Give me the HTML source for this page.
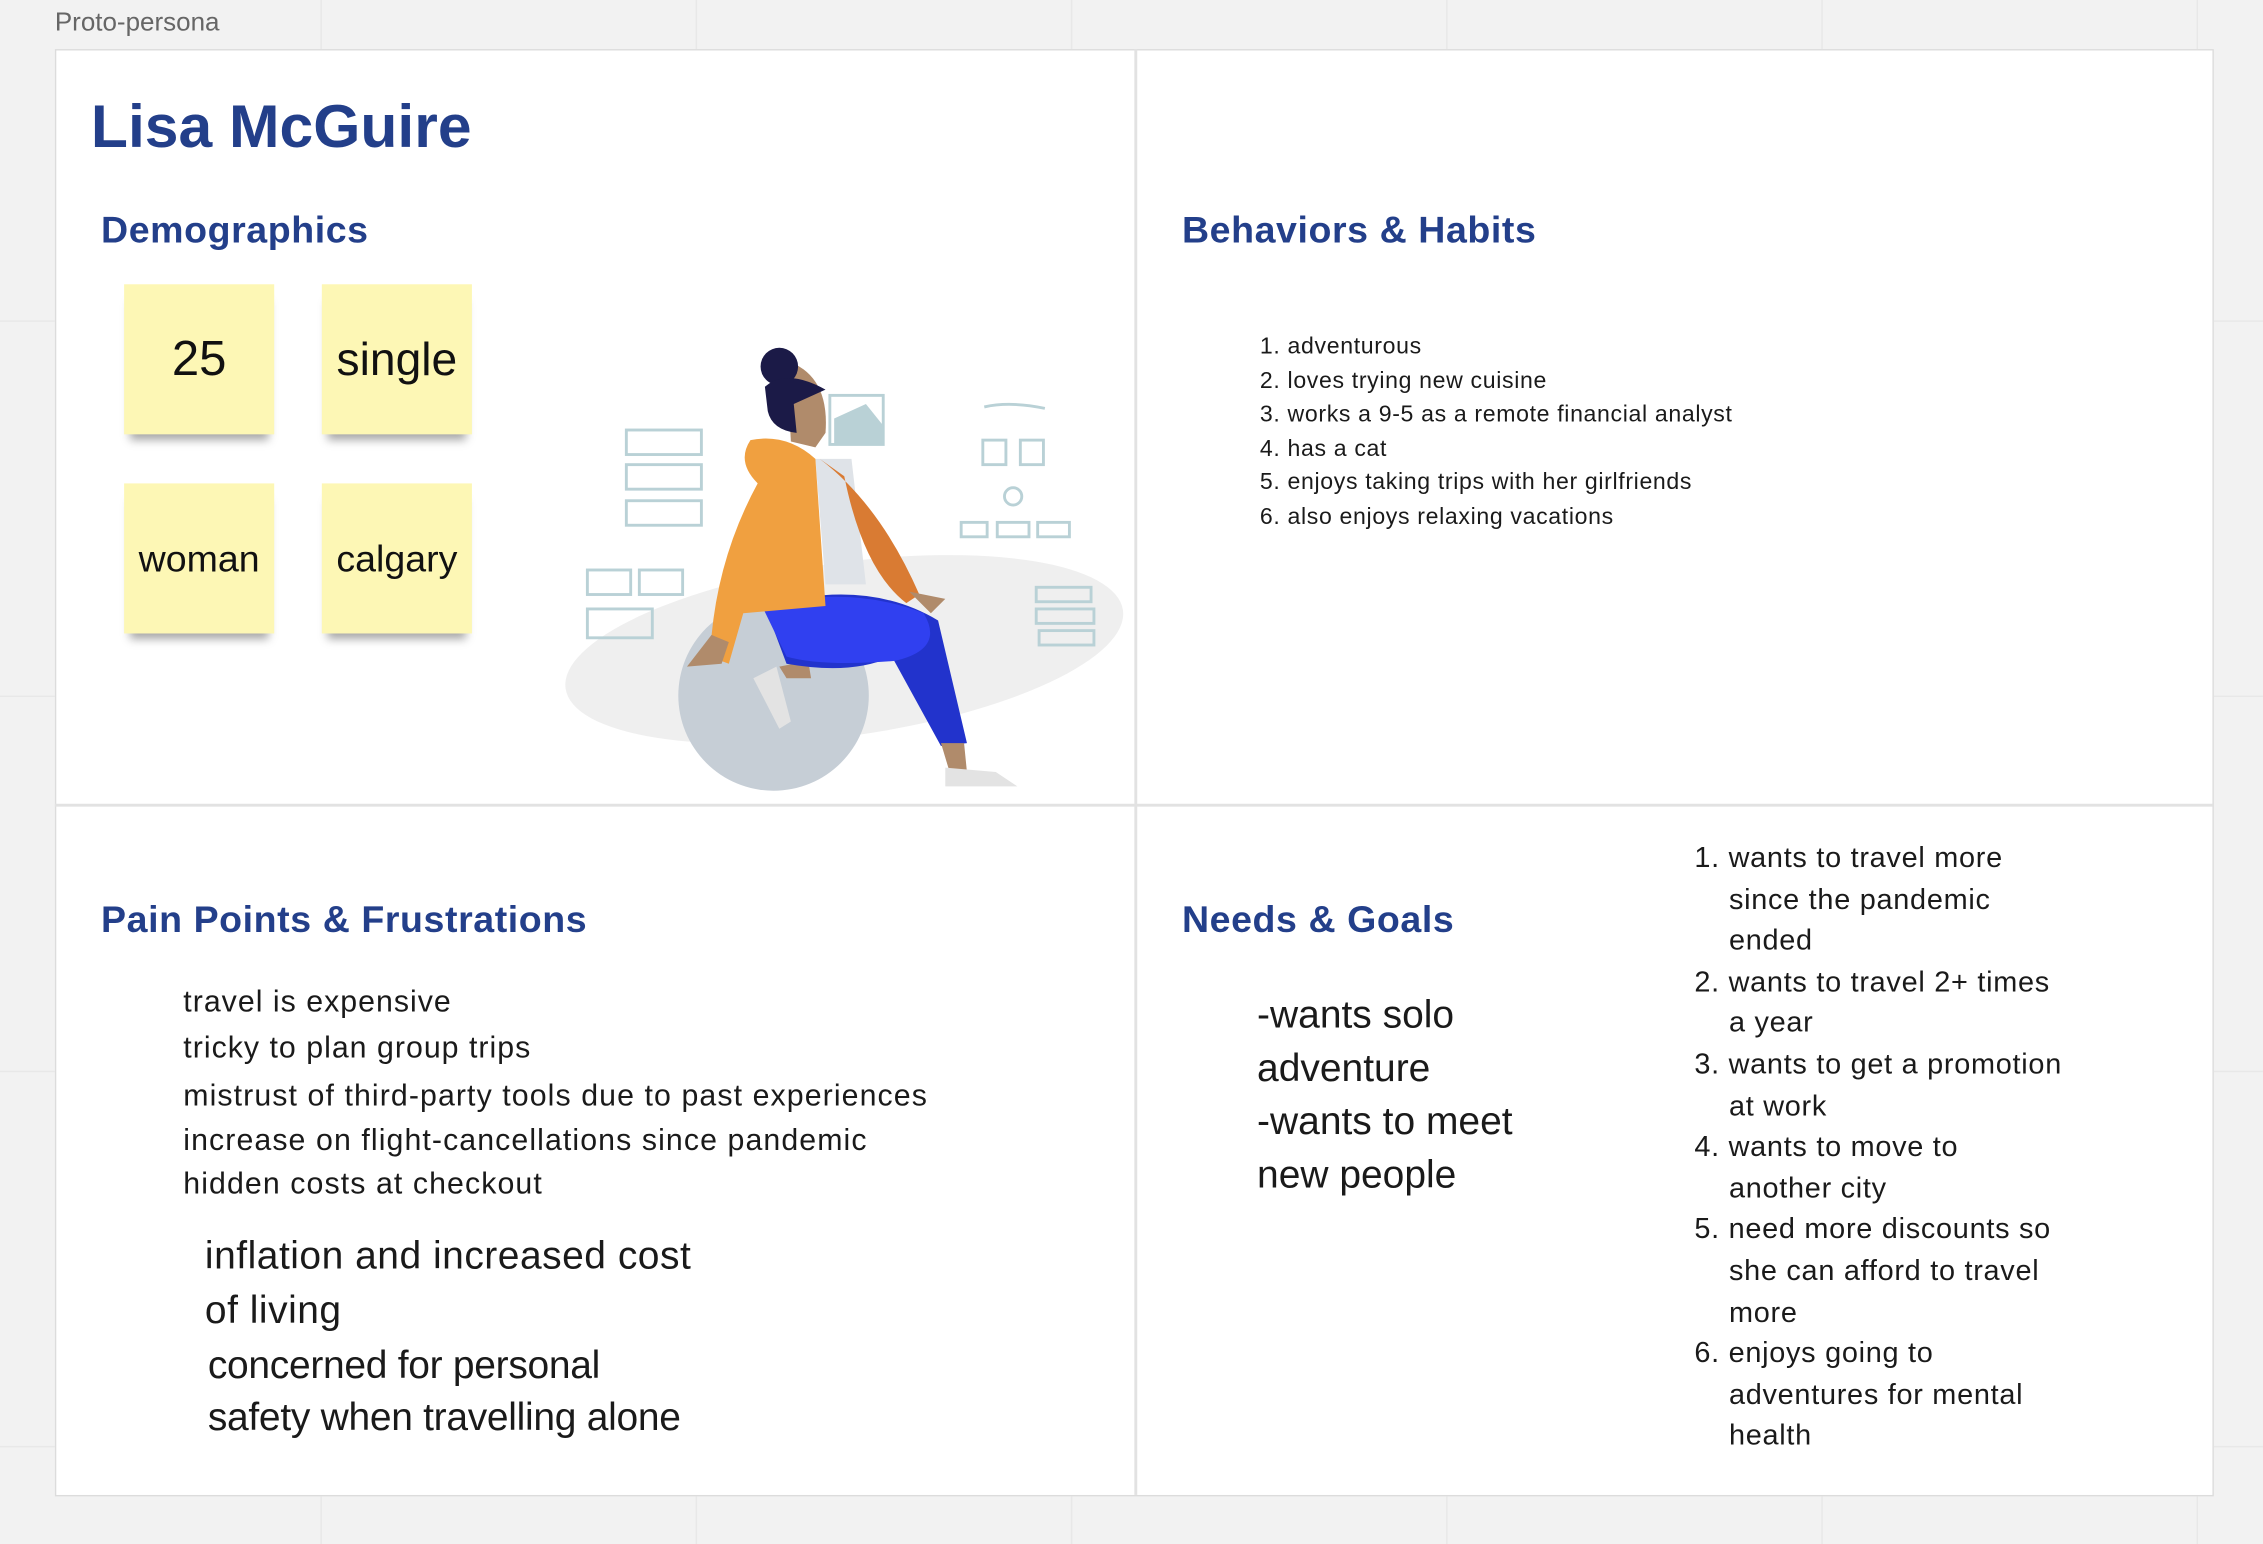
<!DOCTYPE html>
<html><head><meta charset="utf-8"><style>
html,body{margin:0;padding:0;width:2263px;height:1544px;overflow:hidden;background:#f2f2f2}
#s{position:absolute;left:0;top:0;width:1568px;height:1070px;transform:scale(1.4432,1.443);transform-origin:0 0;font-family:"Liberation Sans",sans-serif;
background-color:#f2f2f2;background-image:linear-gradient(#e8e8e8 1px,transparent 1px),linear-gradient(90deg,#e8e8e8 1px,transparent 1px);background-size:260px 260px;background-position:222px 222px}
.a{position:absolute;white-space:nowrap}
.board{position:absolute;left:38px;top:34px;width:1494px;height:1001px;background:#fff;border:1px solid #dcdcdc}
.h{color:#233f8a;font-weight:bold;font-size:26px;letter-spacing:0.4px}
.note{position:absolute;width:104px;height:104px;background:#fdf7b5;box-shadow:0 8px 6px -4px rgba(0,0,0,.35);display:flex;align-items:center;justify-content:center;color:#111}
.t{color:#1a1a1a}
</style></head><body><div id="s">
<div class="a" style="left:38px;top:5px;font-size:18px;color:#666">Proto-persona</div>
<div class="board"></div>
<div class="a" style="left:786px;top:34px;width:2px;height:1002px;background:#e2e2e2"></div>
<div class="a" style="left:38px;top:557px;width:1495px;height:2px;background:#e2e2e2"></div>

<div class="a" style="left:63px;top:64px;font-size:42px;font-weight:bold;color:#233f8a">Lisa McGuire</div>
<div class="a h" style="left:70px;top:144px">Demographics</div>
<div class="note" style="left:86px;top:197px;font-size:34px">25</div>
<div class="note" style="left:223px;top:197px;font-size:32px">single</div>
<div class="note" style="left:86px;top:335px;font-size:26px">woman</div>
<div class="note" style="left:223px;top:335px;font-size:26px">calgary</div>

<svg class="a" style="left:390px;top:230px" width="390" height="320" viewBox="390 230 390 320">
<ellipse cx="585" cy="450" rx="195" ry="60" transform="rotate(-8 585 450)" fill="#efefef"/>
<g fill="none" stroke="#b9d1d6" stroke-width="2">
<rect x="434" y="298" width="52" height="17"/><rect x="434" y="322" width="52" height="17"/><rect x="434" y="347" width="52" height="17"/>
<rect x="407" y="395" width="30" height="17"/><rect x="443" y="395" width="30" height="17"/><rect x="407" y="422" width="45" height="20"/>
<rect x="575" y="274" width="37" height="34"/>
<rect x="681" y="305" width="16" height="17"/><rect x="707" y="305" width="16" height="17"/>
<circle cx="702" cy="344" r="6"/><rect x="666" y="362" width="18" height="10"/><rect x="691" y="362" width="22" height="10"/><rect x="719" y="362" width="22" height="10"/>
<rect x="718" y="407" width="38" height="10"/><rect x="718" y="422" width="40" height="10"/><rect x="720" y="437" width="38" height="10"/>
<path d="M682 282 Q700 278 724 283"/>
</g>
<path d="M578 290 L600 280 L612 295 L612 308 L578 308Z" fill="#b9d1d6"/>
<circle cx="536" cy="482" r="66" fill="#c6ced6"/>
<path d="M522 470 L540 505 L548 500 L538 462Z" fill="#e3e3e3"/>
<path d="M540 462 L560 458 L562 470 L545 470Z" fill="#b08b6b"/>
<path d="M530 420 Q600 400 650 430 L670 515 L652 517 L618 455 Q590 468 545 460 Z" fill="#2233cc"/>
<path d="M528 420 Q590 405 640 425 Q655 450 620 458 Q570 462 545 455Z" fill="#3040f0"/>
<path d="M652 515 L668 515 L670 535 L658 535Z" fill="#b08b6b"/>
<path d="M655 532 L690 535 L705 545 L655 545Z" fill="#e3e3e3"/>
<path d="M565 318 L590 318 L600 405 L572 405Z" fill="#dfe3e8"/>
<path d="M568 318 Q610 350 637 412 L628 418 Q598 395 585 330Z" fill="#d97b33"/>
<path d="M520 305 Q545 300 565 318 L572 420 L515 425 L505 460 L492 455 Q495 390 525 335 Q510 320 520 305Z" fill="#f0a040"/>
<path d="M545 250 Q575 260 572 300 L565 310 L548 306Z" fill="#b08b6b"/>
<path d="M630 410 L655 415 L645 425Z" fill="#b08b6b"/>
<path d="M493 440 L505 445 L500 460 L476 462Z" fill="#b08b6b"/>
<circle cx="540" cy="254" r="13" fill="#1b1a47"/>
<path d="M530 268 Q545 255 572 270 L550 280 L552 300 Q535 298 532 285Z" fill="#1b1a47"/>
</svg>

<div class="a h" style="left:819px;top:144px">Behaviors &amp; Habits</div>
<div class="a t" style="left:873px;top:229px;font-size:16px;line-height:23.6px;letter-spacing:0.45px">
1. adventurous<br>2. loves trying new cuisine<br>3. works a 9-5 as a remote financial analyst<br>4. has a cat<br>5. enjoys taking trips with her girlfriends<br>6. also enjoys relaxing vacations</div>

<div class="a h" style="left:70px;top:622px">Pain Points &amp; Frustrations</div>
<div class="a t" style="left:127px;top:679px;font-size:21px;line-height:32px;letter-spacing:0.7px">travel is expensive<br>tricky to plan group trips</div>
<div class="a t" style="left:127px;top:745px;font-size:21px;line-height:30.5px;letter-spacing:0.75px">mistrust of third-party tools due to past experiences<br>increase on flight-cancellations since pandemic<br>hidden costs at checkout</div>
<div class="a t" style="left:142px;top:851px;font-size:27px;line-height:38px;letter-spacing:0.35px">inflation and increased cost<br>of living</div>
<div class="a t" style="left:144px;top:929px;font-size:27px;line-height:35.5px;letter-spacing:-0.2px">concerned for personal<br>safety when travelling alone</div>

<div class="a h" style="left:819px;top:622px">Needs &amp; Goals</div>
<div class="a t" style="left:871px;top:685px;font-size:27px;line-height:37px">-wants solo<br>adventure<br>-wants to meet<br>new people</div>
<div class="a t" style="left:1174px;top:581px;font-size:20px;line-height:28.6px;letter-spacing:0.5px">
1. wants to travel more<br><span style="padding-left:24px">since the pandemic</span><br><span style="padding-left:24px">ended</span><br>2. wants to travel 2+ times<br><span style="padding-left:24px">a year</span><br>3. wants to get a promotion<br><span style="padding-left:24px">at work</span><br>4. wants to move to<br><span style="padding-left:24px">another city</span><br>5. need more discounts so<br><span style="padding-left:24px">she can afford to travel</span><br><span style="padding-left:24px">more</span><br>6. enjoys going to<br><span style="padding-left:24px">adventures for mental</span><br><span style="padding-left:24px">health</span></div>
</div></body></html>
